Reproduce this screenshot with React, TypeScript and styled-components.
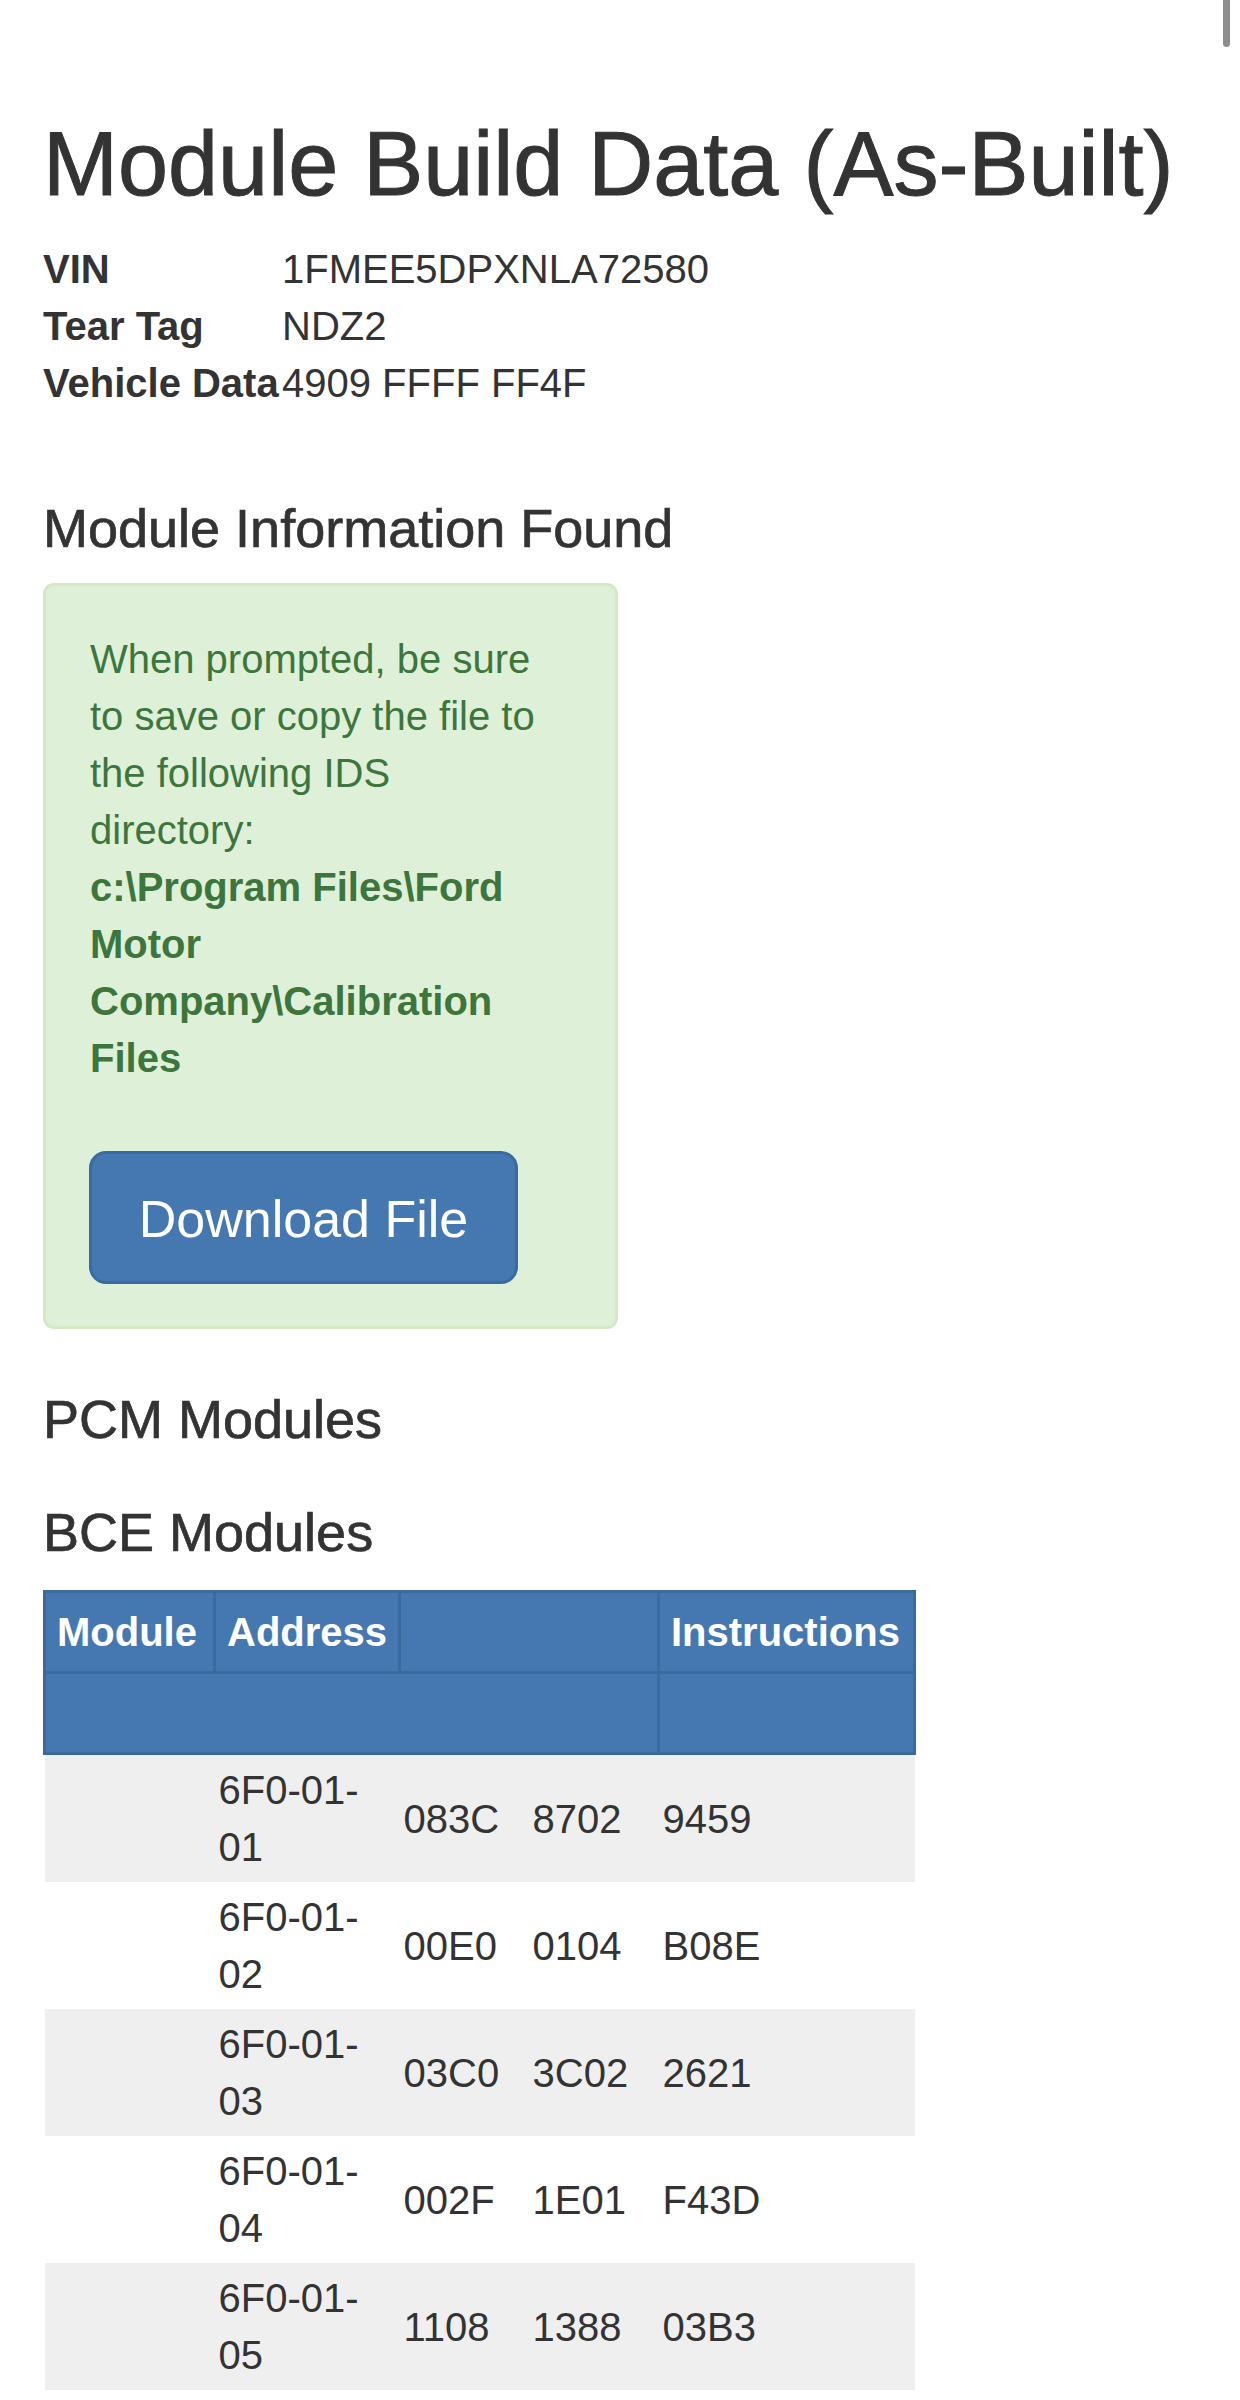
import React from "react";
import styled, { createGlobalStyle } from "styled-components";

const GlobalStyle = createGlobalStyle`
  body {
    margin: 0;
    background: #fff;
    color: #333;
    font-family: "Liberation Sans", Arial, sans-serif;
    font-size: 40px;
    line-height: 57px;
  }
`;

const ScrollThumb = styled.div`
  position: fixed;
  top: 0;
  right: 10px;
  width: 7px;
  height: 47px;
  background: #8d8d8d;
  border-radius: 0 0 4px 4px;
`;

const Page = styled.main`
  padding: 0 43px 9px;
`;

const Title = styled.h1`
  margin: 115px 0 0;
  font-size: 90px;
  line-height: 99px;
  font-weight: 500;
  color: #333;
  -webkit-text-stroke: 1px #333;
`;

const InfoList = styled.dl`
  display: grid;
  grid-template-columns: 239px 1fr;
  margin: 27px 0 0;
  dt {
    font-weight: bold;
    white-space: nowrap;
  }
  dd {
    margin: 0;
  }
`;

const SectionTitle = styled.h3<{ $top: number }>`
  margin: ${(p) => p.$top}px 0 28px;
  font-size: 54px;
  line-height: 59px;
  font-weight: 500;
  color: #333;
  -webkit-text-stroke: 0.7px #333;
`;

const Notice = styled.div`
  box-sizing: border-box;
  width: 575px;
  margin-top: -3px;
  padding: 45px 55px 42px 44px;
  background: #dff0d8;
  border: 3px solid #d6e9c6;
  border-radius: 11px;
  color: #3c763d;
  p {
    margin: 0 0 64px;
  }
`;

const DownloadButton = styled.button`
  display: block;
  box-sizing: border-box;
  width: 429px;
  margin-left: -1px;
  padding: 31px 0 27px;
  background: #4577b1;
  border: 3px solid #3a6a9f;
  border-radius: 17px;
  color: #fff;
  font-family: inherit;
  font-size: 52px;
  line-height: 69px;
  text-align: center;
`;

const ModuleTable = styled.table`
  width: 870px;
  table-layout: fixed;
  border-collapse: collapse;
  border-spacing: 0;
`;

const HeadCell = styled.th`
  padding: 11px 14px 10px 11px;
  background: #4577b1;
  border: 3px solid #3b6a9f;
  color: #fff;
  font-weight: bold;
  text-align: left;
  line-height: 57px;
  white-space: nowrap;
  overflow: visible;
`;

const Row = styled.tr`
  &:nth-child(odd) {
    background: #efefef;
  }
`;

const Cell = styled.td`
  padding: 7px 7px 6px 4px;
  line-height: 57px;
  vertical-align: middle;
`;

const rows = [
  { address: "6F0-01-01", data: ["083C", "8702", "9459"] },
  { address: "6F0-01-02", data: ["00E0", "0104", "B08E"] },
  { address: "6F0-01-03", data: ["03C0", "3C02", "2621"] },
  { address: "6F0-01-04", data: ["002F", "1E01", "F43D"] },
  { address: "6F0-01-05", data: ["1108", "1388", "03B3"] },
];

// allow the address to wrap after its last dash
const Address: React.FC<{ value: string }> = ({ value }) => {
  const cut = value.lastIndexOf("-") + 1;
  return (
    <>
      {value.slice(0, cut)}
      <wbr />
      {value.slice(cut)}
    </>
  );
};

const App: React.FC = () => {
  return (
    <>
      <GlobalStyle />
      <ScrollThumb />
      <Page>
        <Title>Module Build Data (As-Built)</Title>
        <InfoList>
          <dt>VIN</dt>
          <dd>1FMEE5DPXNLA72580</dd>
          <dt>Tear Tag</dt>
          <dd>NDZ2</dd>
          <dt>Vehicle Data</dt>
          <dd>4909 FFFF FF4F</dd>
        </InfoList>

        <SectionTitle $top={87}>Module Information Found</SectionTitle>
        <Notice>
          <p>
            When prompted, be sure to save or copy the file to the following IDS directory:
            <br />
            <strong>c:\Program Files\Ford Motor Company\Calibration Files</strong>
          </p>
          <DownloadButton>Download File</DownloadButton>
        </Notice>

        <SectionTitle $top={61}>PCM Modules</SectionTitle>

        <SectionTitle $top={54}>BCE Modules</SectionTitle>
        <ModuleTable>
          <colgroup>
            <col style={{ width: 170 }} />
            <col style={{ width: 185 }} />
            <col style={{ width: 129 }} />
            <col style={{ width: 130 }} />
            <col style={{ width: 256 }} />
          </colgroup>
          <thead>
            <tr>
              <HeadCell>Module</HeadCell>
              <HeadCell>Address</HeadCell>
              <HeadCell colSpan={2} />
              <HeadCell>Instructions</HeadCell>
            </tr>
            <tr>
              <HeadCell colSpan={4}>&nbsp;</HeadCell>
              <HeadCell>&nbsp;</HeadCell>
            </tr>
          </thead>
          <tbody>
            {rows.map((row) => (
              <Row key={row.address}>
                <Cell />
                <Cell>
                  <Address value={row.address} />
                </Cell>
                {row.data.map((d, i) => (
                  <Cell key={i}>{d}</Cell>
                ))}
              </Row>
            ))}
          </tbody>
        </ModuleTable>
      </Page>
    </>
  );
};

export default App;
